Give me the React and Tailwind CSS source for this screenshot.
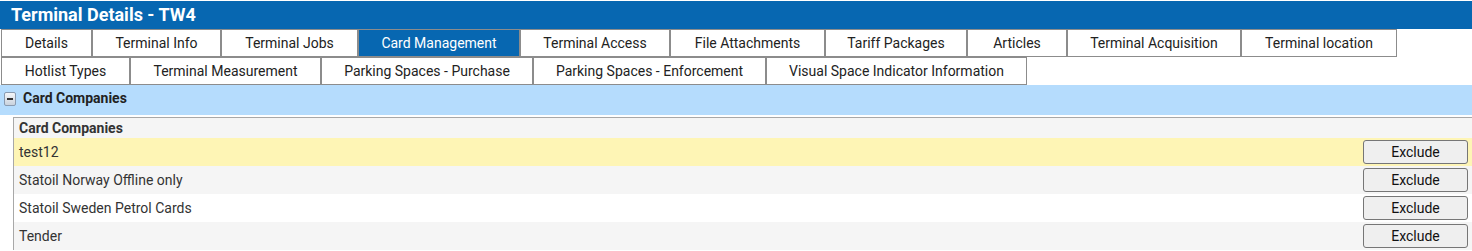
import React from "react";

const row1 = [
  ["Details", "w-[91px]"],
  ["Terminal Info", "w-[129px]"],
  ["Terminal Jobs", "w-[137px]"],
  ["Card Management", "w-[162px]", true],
  ["Terminal Access", "w-[150px]"],
  ["File Attachments", "w-[155px]"],
  ["Tariff Packages", "w-[142px]"],
  ["Articles", "w-[100px]"],
  ["Terminal Acquisition", "w-[174px]"],
  ["Terminal location", "w-[156px]"],
];
const row2 = [
  ["Hotlist Types", "w-[129px]"],
  ["Terminal Measurement", "w-[191px]"],
  ["Parking Spaces - Purchase", "w-[212px]"],
  ["Parking Spaces - Enforcement", "w-[233px]"],
  ["Visual Space Indicator Information", "w-[261px]"],
];

const rows = [
  ["test12", "bg-[#fef5b5]"],
  ["Statoil Norway Offline only", "bg-[#f5f5f5]"],
  ["Statoil Sweden Petrol Cards", "bg-white"],
  ["Tender", "bg-[#f5f5f5]"],
];

function Tab({ label, w, active }) {
  return (
    <div
      className={`${w} h-[28px] border border-[#8c8c8c] flex items-center justify-center text-[14px] ${
        active ? "bg-[#0767b1] text-white" : "bg-white text-[#222]"
      }`}
    >
      {label}
    </div>
  );
}

export default function App() {
  return (
    <div className="w-[1472px] h-[251px] bg-white overflow-hidden font-['Roboto',sans-serif]">
      <div className="h-[28px] mt-px bg-[#0767b1] flex items-center pl-[11px]">
        <span className="text-white font-bold text-[18px] leading-none">Terminal Details - TW4</span>
      </div>
      <div className="pl-px">
        <div className="flex">
          {row1.map(([l, w, a]) => (
            <Tab key={l} label={l} w={w} active={a} />
          ))}
        </div>
        <div className="flex">
          {row2.map(([l, w]) => (
            <Tab key={l} label={l} w={w} />
          ))}
        </div>
      </div>
      <div className="h-[30px] bg-[#b5dcfd] flex items-center pl-[4px] pb-[3px] gap-[7px]">
        <div className="w-[12px] h-[14px] border border-[#8a9bb0] rounded-[2px] bg-gradient-to-b from-[#f4f6f9] to-[#c9d2dd] flex items-center justify-center">
          <div className="w-[6px] h-[2px] bg-[#333]" />
        </div>
        <span className="font-bold text-[14px] text-[#222]">Card Companies</span>
      </div>
      <div className="ml-[13px] mt-[2px] border-t border-l border-[#a8a8a8]">
        <div className="h-[20px] bg-[#f5f5f5] flex items-center pl-[5px] font-bold text-[14px] text-[#333]">
          Card Companies
        </div>
        {rows.map(([t, bg]) => (
          <div key={t} className={`h-[28px] ${bg} flex items-center justify-between pl-[5px] pr-[4px]`}>
            <span className="text-[14px] text-[#333]">{t}</span>
            <button className="w-[105px] h-[24px] border border-[#767676] rounded-[3px] bg-[#efefef] text-[14px] text-[#111] flex items-center justify-center">
              Exclude
            </button>
          </div>
        ))}
      </div>
    </div>
  );
}
